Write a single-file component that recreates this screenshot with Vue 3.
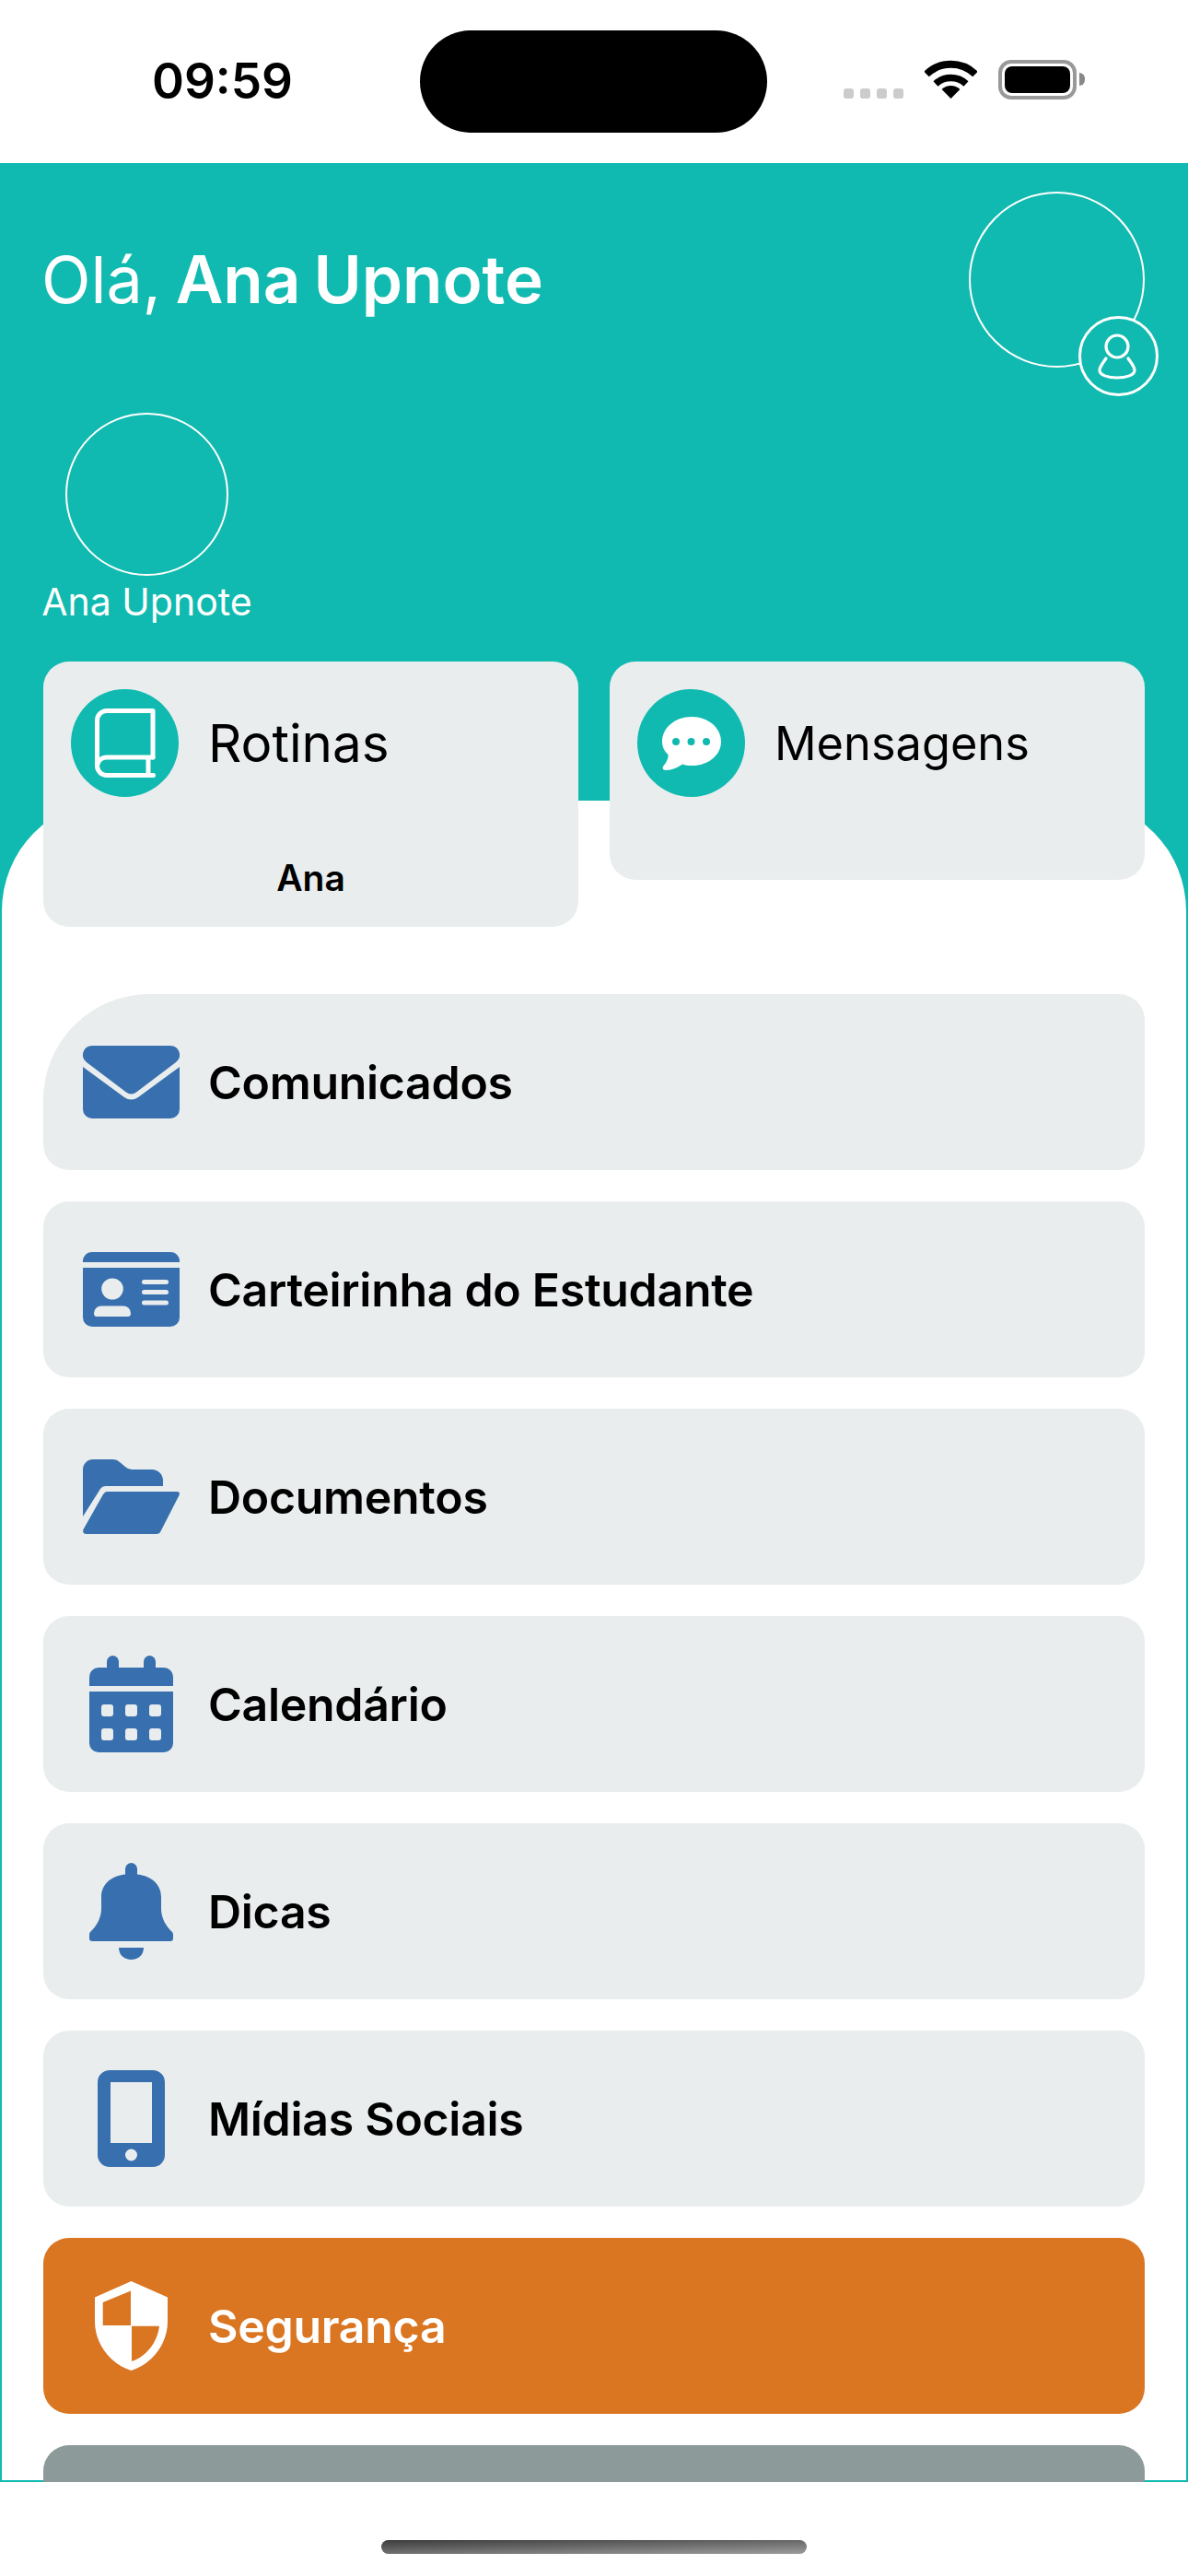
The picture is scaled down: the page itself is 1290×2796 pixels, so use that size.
<template>
  <div class="screen">
    <div class="status-bar">
      <span class="clock">09:59</span>
      <div class="island"></div>
      <div class="signal">
        <i v-for="n in 4" :key="n"></i>
      </div>
      <svg class="wifi" width="57" height="42" viewBox="0 0 57 42">
        <path d="M2 15.5A38 38 0 0 1 55 15.5" fill="none" stroke="#000" stroke-width="8" />
        <path d="M12 26A24.5 24.5 0 0 1 45 26" fill="none" stroke="#000" stroke-width="7.5" />
        <path d="M28.5 42L18.6 32A14 14 0 0 1 38.4 32Z" fill="#000" />
      </svg>
      <div class="battery"><div class="battery-level"></div></div>
      <div class="battery-cap"></div>
    </div>

    <main class="main">
      <section class="hero">
        <div class="hero-top">
          <h1 class="greeting">Olá, <strong>Ana Upnote</strong></h1>
          <div class="avatar avatar-big">
            <div class="badge">
              <svg width="87" height="87" viewBox="0 0 87 87" fill="none" stroke="#fff" stroke-width="3.2" stroke-linecap="round">
                <circle cx="42" cy="33" r="12" />
                <path d="M30 46C26 52 23 55 23 59C23 64 32 67 42 67C52 67 61 64 61 59C61 55 58 52 54 46" />
              </svg>
            </div>
          </div>
        </div>
        <div class="student">
          <div class="avatar avatar-student"></div>
          <span class="student-name">Ana Upnote</span>
        </div>
      </section>

      <div class="shortcuts">
        <div class="shortcut">
          <div class="shortcut-head">
            <div class="shortcut-icon">
              <svg width="66" height="75" viewBox="0 0 66 75" fill="none" stroke="#fff" stroke-width="5" stroke-linejoin="round" stroke-linecap="round">
                <path d="M63 53V2.5H13A10.5 10.5 0 0 0 2.5 13V62A10.5 10.5 0 0 0 13 72.5H63.5" />
                <path d="M63 53H13A10 10 0 0 0 2.5 62" />
                <path d="M58 54V72" stroke-linecap="butt" />
              </svg>
            </div>
            <span class="shortcut-label label-routines">Rotinas</span>
          </div>
          <div class="shortcut-sub">Ana</div>
        </div>
        <div class="shortcut">
          <div class="shortcut-head">
            <div class="shortcut-icon">
              <svg width="66" height="58" viewBox="0 0 66 58">
                <path d="M33 0C51 0 65 12 65 27C65 42 51 53 33 53C29 53 26 52.500 23 51.500C18 55 12 58 5 58C2 58 1 56 2 54C6 49 8 45 7.500 41C3 37 1 32 1 27C1 12 15 0 33 0Z" fill="#fff" />
                <circle cx="16" cy="27" r="4" fill="#10bab0" />
                <circle cx="32.500" cy="27" r="4" fill="#10bab0" />
                <circle cx="49" cy="27" r="4" fill="#10bab0" />
              </svg>
            </div>
            <span class="shortcut-label label-messages">Mensagens</span>
          </div>
        </div>
      </div>

      <section class="sheet">
        <div class="menu">
          <div class="row row-first">
            <div class="row-icon">
              <svg width="105" height="79" viewBox="0 0 105 79" fill="#3870af">
                <path d="M10 0H95A10 10 0 0 1 101 18L58 50.500Q52.500 54.500 47 50.500L4 18A10 10 0 0 1 10 0Z" />
                <path d="M0 23L45 56Q52.500 61 60 56L105 23V69A10 10 0 0 1 95 79H10A10 10 0 0 1 0 69Z" />
              </svg>
            </div>
            <span>Comunicados</span>
          </div>
          <div class="row">
            <div class="row-icon">
              <svg width="105" height="81" viewBox="0 0 105 81" fill="#3870af">
                <path d="M0 11A10 10 0 0 1 10 0H95A10 10 0 0 1 105 11Z" />
                <path fill-rule="evenodd" d="M0 17H105V71A10 10 0 0 1 95 81H10A10 10 0 0 1 0 71ZM32 28.500A11.800 11.500 0 1 0 32 51.500A11.800 11.500 0 1 0 32 28.500ZM20 58.500A8 8 0 0 0 12 66.500Q12 70 15 70H49Q52 70 52 66.500A8 8 0 0 0 44 58.500ZM66.500 30A2.500 2.500 0 0 0 66.500 35H90.500A2.500 2.500 0 0 0 90.500 30ZM66.500 41A2.500 2.500 0 0 0 66.500 46H90.500A2.500 2.500 0 0 0 90.500 41ZM66.500 52.500A2.500 2.500 0 0 0 66.500 57.500H90.500A2.500 2.500 0 0 0 90.500 52.500Z" />
              </svg>
            </div>
            <span>Carteirinha do Estudante</span>
          </div>
          <div class="row">
            <div class="row-icon">
              <svg width="105" height="81" viewBox="0 0 105 81" fill="#3870af">
                <path d="M0 11A11 11 0 0 1 11 0H33Q37 0 40 3L46 8Q49 11 53 11H75A12 12 0 0 1 87 23V29H25Q21 29 19 32L0 62Z" />
                <path d="M26 35H102Q106 35 104.500 39L84 79Q83 81 80 81H4Q-1 81 0.500 76L22 38Q24 35 26 35Z" />
              </svg>
            </div>
            <span>Documentos</span>
          </div>
          <div class="row">
            <div class="row-icon">
              <svg width="91" height="105" viewBox="0 0 91 105" fill="#3870af">
                <path d="M19 13V6.500A6.500 6.500 0 0 1 32 6.500V13H59V6.500A6.500 6.500 0 0 1 72 6.500V13H81A10 10 0 0 1 91 23V33H0V23A10 10 0 0 1 10 13Z" />
                <path fill-rule="evenodd" d="M0 39H91V95A10 10 0 0 1 81 105H10A10 10 0 0 1 0 95ZM16 53A3 3 0 0 0 13 56V63A3 3 0 0 0 16 66H23A3 3 0 0 0 26 63V56A3 3 0 0 0 23 53ZM42 53A3 3 0 0 0 39 56V63A3 3 0 0 0 42 66H49A3 3 0 0 0 52 63V56A3 3 0 0 0 49 53ZM68 53A3 3 0 0 0 65 56V63A3 3 0 0 0 68 66H75A3 3 0 0 0 78 63V56A3 3 0 0 0 75 53ZM16 79A3 3 0 0 0 13 82V89A3 3 0 0 0 16 92H23A3 3 0 0 0 26 89V82A3 3 0 0 0 23 79ZM42 79A3 3 0 0 0 39 82V89A3 3 0 0 0 42 92H49A3 3 0 0 0 52 89V82A3 3 0 0 0 49 79ZM68 79A3 3 0 0 0 65 82V89A3 3 0 0 0 68 92H75A3 3 0 0 0 78 89V82A3 3 0 0 0 75 79Z" />
              </svg>
            </div>
            <span>Calendário</span>
          </div>
          <div class="row">
            <div class="row-icon">
              <svg width="91" height="105" viewBox="0 0 91 105" fill="#3870af">
                <path d="M39 12.500V6.500A6.500 6.500 0 0 1 52 6.500V12.500C67 14 78 23 78 37V50C78 59 83 69 90 75Q91 76 91 78V82Q91 85 88 85H3Q0 85 0 82V78Q0 76 1 75C8 69 13 59 13 50V37C13 23 24 14 39 12.500Z" />
                <path d="M32 92H59C59 100 53 105 45.500 105C38 105 32 100 32 92Z" />
              </svg>
            </div>
            <span>Dicas</span>
          </div>
          <div class="row">
            <div class="row-icon">
              <svg width="73" height="105" viewBox="0 0 73 105" fill="#3870af">
                <path fill-rule="evenodd" d="M13 0H60A13 13 0 0 1 73 13V92A13 13 0 0 1 60 105H13A13 13 0 0 1 0 92V13A13 13 0 0 1 13 0ZM14 13V79H59V13ZM36.500 85.500A6.500 6.500 0 1 0 36.500 98.500A6.500 6.500 0 1 0 36.500 85.500Z" />
              </svg>
            </div>
            <span>Mídias Sociais</span>
          </div>
          <div class="row row-orange">
            <div class="row-icon">
              <svg width="79" height="97" viewBox="0 0 79 97" fill="#fff">
                <path fill-rule="evenodd" d="M39.500 0L79 17.500V44C79 68 62 90 39.500 97C17 90 0 68 0 44V17.500ZM39 10.500L8.700 23V48H39ZM40 48.700V87C56 82 68 66 70 48.700Z" />
              </svg>
            </div>
            <span>Segurança</span>
          </div>
          <div class="row row-grey"></div>
        </div>
      </section>
    </main>

    <div class="home-area">
      <div class="home-indicator"></div>
    </div>
  </div>
</template>

<script setup>
</script>

<style>
html, body {
  margin: 0;
  background: #fff;
}
</style>

<style scoped>
.screen {
  width: 1290px;
  height: 2796px;
  display: flex;
  flex-direction: column;
  background: #fff;
  font-family: Inter, "Liberation Sans", sans-serif;
  color: #000;
  overflow: hidden;
}

.status-bar {
  height: 177px;
  flex-shrink: 0;
  position: relative;
}

.clock {
  position: absolute;
  left: 165px;
  top: 56px;
  font-size: 53px;
  line-height: 64px;
  font-weight: 600;
}

.island {
  position: absolute;
  left: 456px;
  top: 33px;
  width: 377px;
  height: 111px;
  border-radius: 56px;
  background: #000;
}

.signal {
  position: absolute;
  left: 916px;
  top: 96px;
  display: flex;
  gap: 7px;
}

.signal i {
  width: 11px;
  height: 11px;
  border-radius: 3px;
  background: #ccc;
}

.wifi {
  position: absolute;
  left: 1004px;
  top: 65px;
}

.battery {
  position: absolute;
  left: 1084px;
  top: 65px;
  width: 85px;
  height: 43px;
  box-sizing: border-box;
  border: 4px solid #999;
  border-radius: 14px;
  padding: 3px;
}

.battery-level {
  height: 100%;
  border-radius: 8px;
  background: #000;
}

.battery-cap {
  position: absolute;
  left: 1172px;
  top: 79px;
  width: 6px;
  height: 14px;
  border-radius: 0 7px 7px 0;
  background: #888;
}

.main {
  height: 2517px;
  flex-shrink: 0;
  display: flex;
  flex-direction: column;
  background: #10bab0;
  overflow: hidden;
}

.hero {
  padding: 31px 47px 0;
  height: 510px;
  box-sizing: border-box;
  flex-shrink: 0;
}

.hero-top {
  display: flex;
  justify-content: space-between;
  align-items: flex-start;
}

.greeting {
  margin: 54px 0 0 -2px;
  font-size: 70px;
  line-height: 82px;
  font-weight: 400;
  word-spacing: -4px;
  color: #fff;
}

.greeting strong {
  font-size: 71px;
  font-weight: 600;
}

.avatar {
  box-sizing: border-box;
  border: 2px solid #fff;
  border-radius: 50%;
}

.avatar-big {
  position: relative;
  width: 191px;
  height: 191px;
}

.badge {
  position: absolute;
  left: 117px;
  top: 133px;
  width: 87px;
  height: 87px;
  box-sizing: border-box;
  border: 3px solid #fff;
  border-radius: 50%;
  background: #10bab0;
}

.badge svg {
  display: block;
  margin: -3px;
}

.student {
  width: 225px;
  margin-top: 49px;
  display: flex;
  flex-direction: column;
  align-items: center;
}

.avatar-student {
  width: 177px;
  height: 177px;
}

.student-name {
  margin-top: 4px;
  font-size: 41px;
  line-height: 48px;
  color: #fff;
  white-space: nowrap;
}

.shortcuts {
  position: relative;
  z-index: 1;
  flex-shrink: 0;
  margin: 31px 47px -137px;
  display: flex;
  gap: 34px;
  align-items: flex-start;
}

.shortcut {
  flex: 1;
  box-sizing: border-box;
  min-height: 237px;
  padding: 30px;
  border-radius: 28px;
  background: #e9edee;
}

.shortcut-head {
  display: flex;
  align-items: center;
  gap: 32px;
}

.shortcut-icon {
  width: 117px;
  height: 117px;
  flex-shrink: 0;
  display: flex;
  align-items: center;
  justify-content: center;
  border-radius: 50%;
  background: #10bab0;
}

.shortcut-label {
  line-height: 64px;
}

.label-routines {
  font-size: 56.5px;
}

.label-messages {
  font-size: 50.5px;
}

.shortcut-sub {
  margin-top: 65px;
  text-align: center;
  font-size: 39px;
  line-height: 46px;
  font-weight: 600;
}

.sheet {
  flex: 1;
  min-height: 0;
  box-sizing: border-box;
  border: 2px solid #10bab0;
  border-top: 0;
  border-radius: 120px 120px 0 0;
  background: #fff;
  padding: 210px 45px 0;
}

.menu {
  display: flex;
  flex-direction: column;
  gap: 34px;
}

.row {
  height: 191px;
  flex-shrink: 0;
  display: flex;
  align-items: center;
  gap: 8px;
  padding-left: 20px;
  border-radius: 28px;
  background: #e9edee;
  font-size: 50px;
  font-weight: 600;
  letter-spacing: -0.3px;
}

.row-first {
  border-top-left-radius: 115px;
}

.row-icon {
  width: 151px;
  flex-shrink: 0;
  display: flex;
  justify-content: center;
}

.row-icon svg {
  display: block;
}

.row-orange {
  background: #da7522;
  color: #fff;
}

.row-grey {
  background: #8d9a9a;
}

.home-area {
  flex: 1;
  position: relative;
}

.home-indicator {
  position: absolute;
  left: 414px;
  top: 63px;
  width: 462px;
  height: 15px;
  border-radius: 8px;
  background: linear-gradient(178.5deg, #3c3c3c, #9c9c9c);
}
</style>
